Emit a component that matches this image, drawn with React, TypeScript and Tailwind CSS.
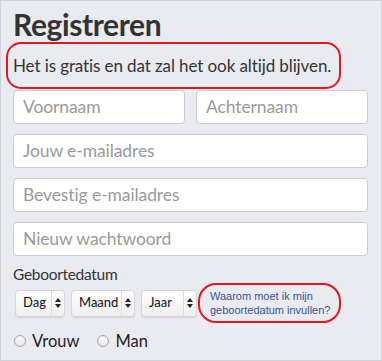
const inputCls =
  "h-[34px] rounded-[4px] border border-[#c8ccd6] bg-white px-[9px] flex items-center text-[17.5px] text-[#9a9a9a] tracking-[-0.1px]";

function Field({ label, className = "" }: { label: string; className?: string }) {
  return <div className={`${inputCls} ${className}`}>{label}</div>;
}

function SelectBox({ label, width, labelWidth }: { label: string; width: string; labelWidth: string }) {
  return (
    <div
      className={`${width} h-[27px] flex rounded-[4px] border border-[#d4d6da] bg-gradient-to-b from-white to-[#eeeeee] shadow-[0_1px_1px_rgba(0,0,0,0.12)] text-[13px] text-[#111]`}
    >
      <div className={`${labelWidth} flex items-center pl-[7px] border-r border-[#dcdcdc]`}>{label}</div>
      <div className="flex-1 flex items-center justify-center">
        <svg width="6" height="10" viewBox="0 0 6 10">
          <path d="M3 0 L6 4 L0 4 Z" fill="#222" />
          <path d="M3 10 L6 6 L0 6 Z" fill="#222" />
        </svg>
      </div>
    </div>
  );
}

function Radio({ label }: { label: string }) {
  return (
    <div className="flex items-center gap-[6px]">
      <span className="w-[12px] h-[12px] rounded-full border border-[#a8a8a8] bg-gradient-to-b from-white to-[#e6e6e6] shadow-[inset_0_1px_1px_rgba(0,0,0,0.08)]" />
      <span className="text-[16.5px] text-[#1d2129] leading-[20px]">{label}</span>
    </div>
  );
}

export default function App() {
  return (
    <div
      className="w-[382px] h-[361px] border border-[#cfd2d8] bg-[#e9ebf1] pl-[12px] pr-[13px] pt-[6px] overflow-hidden"
      style={{ fontFamily: "Lato, 'Open Sans', sans-serif" }}
    >
      <h1 className="text-[30px] font-bold text-[#333] leading-[35px] tracking-[-0.4px]">Registreren</h1>
      <div className="ml-[-7px] w-[335px] h-[47px] border-2 border-[#e5171d] rounded-[15px] flex items-center pl-[5px]">
        <p className="text-[17px] text-[#333] leading-none whitespace-nowrap tracking-[-0.1px]">
          Het is gratis en dat zal het ook altijd blijven.
        </p>
      </div>

      <div className="mt-[1px] flex flex-col gap-[10px]">
        <div className="grid grid-cols-2 gap-[11px]">
          <Field label="Voornaam" />
          <Field label="Achternaam" />
        </div>
        <Field label="Jouw e-mailadres" />
        <Field label="Bevestig e-mailadres" />
        <Field label="Nieuw wachtwoord" />
      </div>

      <div className="mt-[9px] text-[15.5px] text-[#333] leading-[18px] tracking-[-0.3px]">Geboortedatum</div>

      <div className="flex items-center">
        <div className="flex gap-[6px] pl-[2px]">
          <SelectBox label="Dag" width="w-[50px]" labelWidth="w-[36px]" />
          <SelectBox label="Maand" width="w-[64px]" labelWidth="w-[50px]" />
          <SelectBox label="Jaar" width="w-[56px]" labelWidth="w-[42px]" />
        </div>
        <div className="ml-[1px] w-[143px] h-[40px] border-2 border-[#e5171d] rounded-[18px] flex flex-col justify-center pl-[10px]">
          <span
            className="text-[11px] leading-[14px] text-[#365899]"
            style={{ fontFamily: "'Liberation Sans', Arial, sans-serif" }}
          >
            Waarom moet ik mijn
            <br />
            geboortedatum invullen?
          </span>
        </div>
      </div>

      <div className="mt-[8px] flex gap-[18px] pl-[1px]">
        <Radio label="Vrouw" />
        <Radio label="Man" />
      </div>
    </div>
  );
}
